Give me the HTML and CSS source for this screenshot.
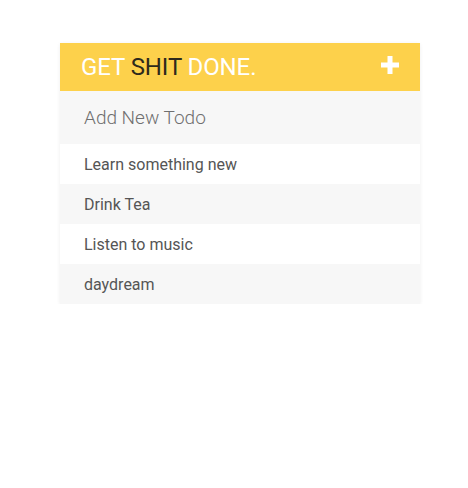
FILE: index.html
```html
<!DOCTYPE html>
<html>
<head>
<meta charset="utf-8">
<link rel="stylesheet" href="styles.css">
</head>
<body>
<div class="app">
  <header class="header">
    <h1 class="title">GET <span class="dark">SHIT</span> DONE.</h1>
    <span class="add" aria-label="Add">
      <svg width="20" height="20" viewBox="0 0 20 20"><path d="M10 1v18M1 10h18" stroke="#fff" stroke-width="5" fill="none"/></svg>
    </span>
  </header>
  <div class="new">Add New Todo</div>
  <ul class="list">
    <li class="item">Learn something new</li>
    <li class="item">Drink Tea</li>
    <li class="item">Listen to music</li>
    <li class="item">daydream</li>
  </ul>
</div>
</body>
</html>
```
FILE: styles.css
```css
html, body { margin: 0; padding: 0; background: #fff; }
body { font-family: Roboto, "Liberation Sans", sans-serif; padding: 43px 0 0 60px; }
.app {
  width: 360px;
  box-shadow: 0 1px 4px rgba(0,0,0,0.07);
}
.header {
  height: 48px;
  background: #fdd14b;
  display: flex;
  align-items: center;
  justify-content: space-between;
  padding: 0 20px 0 21px;
}
.title {
  margin: 0;
  font-size: 24px;
  font-weight: 400;
  color: #fff;
  letter-spacing: -0.1px;
}
.dark { color: #2e2a1c; }
.add { display: flex; width: 20px; height: 20px; margin-top: -4px; }
.new {
  height: 53px;
  background: #f7f7f7;
  display: flex;
  align-items: center;
  padding-left: 24px;
  font-size: 19px;
  font-weight: 300;
  color: #6f6f6f;
}
.list { list-style: none; margin: 0; padding: 0; }
.item {
  height: 40px;
  display: flex;
  align-items: center;
  padding-left: 24px;
  font-size: 16px;
  color: #555;
  background: #fff;
}
.item:nth-child(even) { background: #f7f7f7; }
```
